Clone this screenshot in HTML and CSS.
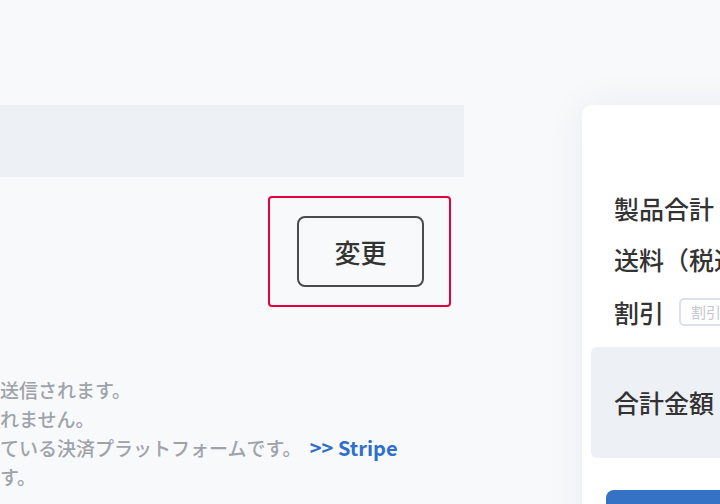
FILE: index.html
```html
<!DOCTYPE html>
<html lang="ja">
<head>
<meta charset="utf-8">
<link rel="stylesheet" href="styles.css">
</head>
<body>
<div class="page">
  <section class="left">
    <div class="bar"></div>
    <div class="change-row">
      <div class="highlight">
        <button class="change-btn">変更</button>
      </div>
    </div>
    <div class="notes">
      <p>送信されます。</p>
      <p>れません。</p>
      <p>ている決済プラットフォームです。 <a class="link" href="#">&gt;&gt; Stripe</a></p>
      <p>す。</p>
    </div>
  </section>
  <aside class="card">
    <div class="row row-first"><span class="label">製品合計</span></div>
    <div class="row"><span class="label">送料（税込）</span></div>
    <div class="row">
      <span class="label">割引</span>
      <span class="coupon">割引コード</span>
    </div>
    <div class="total"><span class="label">合計金額</span></div>
    <button class="pay">注文を確定する</button>
  </aside>
</div>
</body>
</html>
```

FILE: styles.css
```css
html, body {
  margin: 0;
  padding: 0;
}
body {
  width: 720px;
  height: 504px;
  overflow: hidden;
  background: #f8f9fb;
  font-family: "Noto Sans CJK JP", "Noto Sans", sans-serif;
  color: #333;
}
.page {
  display: flex;
  align-items: flex-start;
  gap: 118px;
  padding-top: 105px;
}
.left {
  width: 464px;
  flex: none;
  display: flex;
  flex-direction: column;
}
.bar {
  height: 72px;
  background: #edf0f5;
}
.change-row {
  display: flex;
  justify-content: flex-end;
  padding-right: 13px;
  margin-top: 19px;
}
.highlight {
  box-sizing: border-box;
  width: 183px;
  height: 111px;
  border: 2px solid #e6003c;
  border-radius: 4px;
  display: flex;
  align-items: flex-start;
  padding: 18px 0 0 27px;
}
.change-btn {
  box-sizing: border-box;
  width: 127px;
  height: 71px;
  border: 2px solid #4b4b4d;
  border-radius: 8px;
  background: transparent;
  font-family: "Noto Sans CJK JP", sans-serif;
  font-size: 26px;
  font-weight: 500;
  color: #333;
  padding: 0;
}
.notes {
  margin-top: 68px;
  font-size: 19px;
  line-height: 29px;
  font-weight: 500;
  color: #9ea3aa;
  white-space: nowrap;
}
.notes p {
  margin: 0;
}
.link {
  color: #2f6fcc;
  text-decoration: none;
  font-weight: 600;
  margin-left: 4px;
  font-size: 20px;
}
.card {
  flex: none;
  width: 360px;
  height: 440px;
  background: #fff;
  border-radius: 10px;
  box-shadow: 0 0 40px rgba(30, 40, 60, 0.06);
  padding-top: 78px;
  box-sizing: border-box;
  display: flex;
  flex-direction: column;
}
.row {
  height: 54px;
  display: flex;
  align-items: center;
  padding-left: 32px;
  white-space: nowrap;
}
.row-first {
  height: 50px;
}
.label {
  font-size: 25px;
  font-weight: 500;
  color: #333;
}
.coupon {
  margin-left: 15px;
  box-sizing: border-box;
  height: 28px;
  width: 200px;
  border: 2px solid #dde1e7;
  border-radius: 5px;
  font-size: 15px;
  color: #c3c7cd;
  padding-left: 10px;
  display: flex;
  align-items: center;
}
.total {
  margin: 8px 0 0 9px;
  height: 113px;
  background: #edf0f5;
  border-radius: 6px;
  display: flex;
  align-items: center;
  padding-left: 23px;
  white-space: nowrap;
}
.pay {
  margin: 32px 0 0 24px;
  height: 56px;
  width: 300px;
  border: none;
  border-radius: 8px;
  background: #3572c6;
  color: #fff;
  font-family: "Noto Sans CJK JP", sans-serif;
  font-size: 20px;
}
```
